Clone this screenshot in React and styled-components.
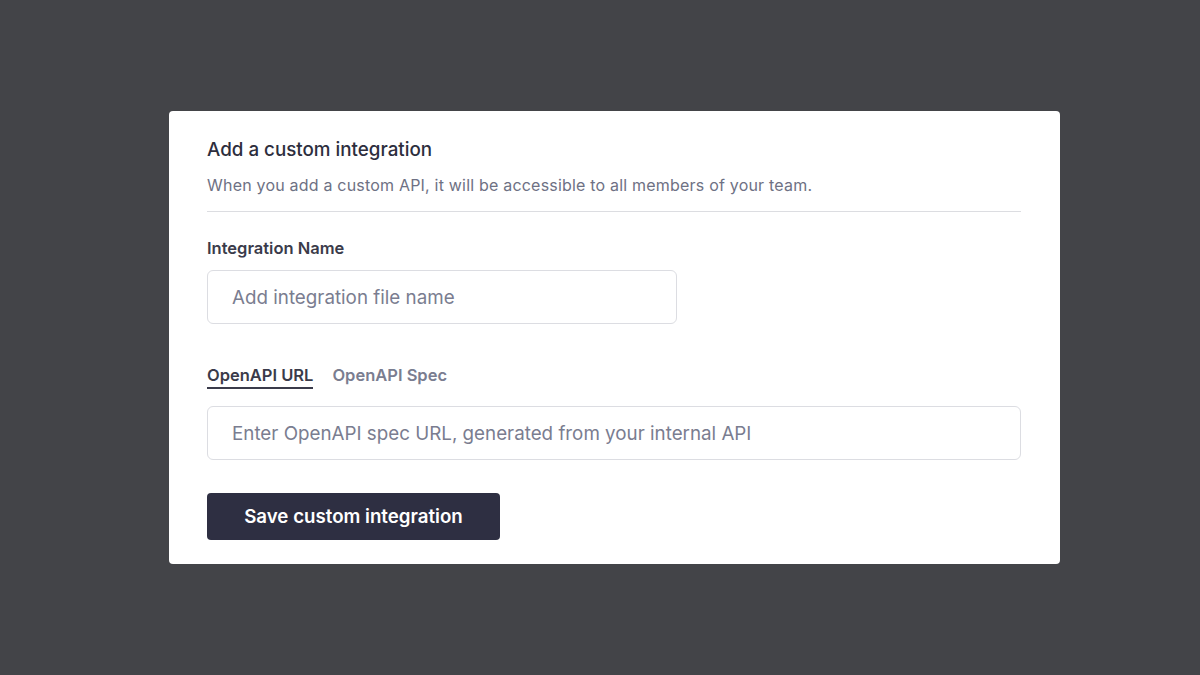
import styled, { createGlobalStyle } from "styled-components";
import { useState } from "react";

const GlobalStyle = createGlobalStyle`
  html, body {
    margin: 0;
    padding: 0;
    background: #434448;
    font-family: Inter, "Noto Sans", sans-serif;
  }
`;

export default function App() {
  const [tab, setTab] = useState("url");
  const [name, setName] = useState("");
  const [url, setUrl] = useState("");

  return (
    <>
      <GlobalStyle />
      <Page>
        <Card>
          <Title>Add a custom integration</Title>
          <Subtitle>
            When you add a custom API, it will be accessible to all members of your team.
          </Subtitle>
          <Divider />
          <Label>Integration Name</Label>
          <Input
            width="470px"
            placeholder="Add integration file name"
            value={name}
            onChange={(e) => setName(e.target.value)}
          />
          <Tabs>
            <Tab active={tab === "url"} onClick={() => setTab("url")}>
              OpenAPI URL
            </Tab>
            <Tab active={tab === "spec"} onClick={() => setTab("spec")}>
              OpenAPI Spec
            </Tab>
          </Tabs>
          <Input
            $top="17px"
            width="100%"
            placeholder="Enter OpenAPI spec URL, generated from your internal API"
            value={url}
            onChange={(e) => setUrl(e.target.value)}
          />
          <SaveButton>Save custom integration</SaveButton>
        </Card>
      </Page>
    </>
  );
}

const Page = styled.div`
  height: 675px;
  display: flex;
  padding: 111px 0 0 169px;
  box-sizing: border-box;
`;

const Card = styled.div`
  width: 891px;
  height: 453px;
  box-sizing: border-box;
  background: #fff;
  border-radius: 4px;
  padding: 27px 39px 0 38px;
  display: flex;
  flex-direction: column;
  align-items: flex-start;
`;

const Title = styled.div`
  font-size: 18.8px;
  font-weight: 500;
  color: #2d2e3d;
  line-height: 24px;
`;

const Subtitle = styled.div`
  margin-top: 13px;
  font-size: 16px;
  letter-spacing: 0.2px;
  color: #6e7184;
  line-height: 20px;
`;

const Divider = styled.div`
  align-self: stretch;
  height: 1px;
  background: #dcdde1;
  margin-top: 16px;
`;

const Label = styled.div`
  margin-top: 26px;
  font-size: 16.5px;
  font-weight: 600;
  color: #3a3b4a;
  line-height: 20px;
`;

const Input = styled.input`
  margin-top: ${(p) => p.$top || "12px"};
  width: ${(p) => p.width};
  height: 54px;
  box-sizing: border-box;
  border: 1px solid #dcdde2;
  border-radius: 6px;
  padding: 0 24px;
  font-family: Inter, "Noto Sans", sans-serif;
  font-size: 18.8px;
  color: #2a2b38;
  outline: none;
  &::placeholder {
    color: #7a7d90;
  }
`;

const Tabs = styled.div`
  margin-top: 41px;
  display: flex;
  gap: 19px;
`;

const Tab = styled.button`
  background: none;
  border: none;
  padding: 0 0 2px;
  font-family: Inter, "Noto Sans", sans-serif;
  font-size: 16.5px;
  font-weight: 600;
  line-height: 20px;
  color: ${(p) => (p.active ? "#3a3b4a" : "#7a7d90")};
  border-bottom: 2px solid ${(p) => (p.active ? "#3a3b4a" : "transparent")};
  cursor: pointer;
`;

const SaveButton = styled.button`
  margin-top: 33px;
  width: 293px;
  height: 47px;
  border: none;
  border-radius: 4px;
  background: #2e2f42;
  color: #fff;
  font-family: Inter, "Noto Sans", sans-serif;
  font-size: 18.7px;
  font-weight: 600;
  cursor: pointer;
`;
